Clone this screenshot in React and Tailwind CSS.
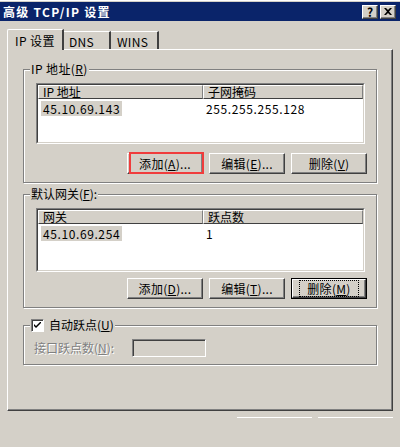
import React from 'react';

const raised = 'border border-t-white border-l-white border-r-[#404040] border-b-[#404040] shadow-[inset_-1px_-1px_0_#808080]';

function U({ children }) {
  return <span className="underline underline-offset-[1px]">{children}</span>;
}

function Btn({ children, isDefault, marked }) {
  return (
    <div className="relative">
      <div
        className={`w-[76px] h-[21px] flex items-center justify-center bg-[#d4d0c8] ${
          isDefault ? 'border border-black' : ''
        }`}
      >
        <div className={`w-full h-full flex items-center justify-center ${raised}`}>
          <div className={`px-[3px] h-[13px] flex items-center leading-[12px] tracking-[0.3px] ${isDefault ? 'outline outline-1 outline-dotted outline-black outline-offset-[1px] px-[6px]' : ''}`}>
            {children}
          </div>
        </div>
      </div>
      {marked && (
        <div className="absolute left-[2px] top-[-1px] right-[-1px] bottom-0 border-2 border-[#f03c3c] pointer-events-none" />
      )}
    </div>
  );
}

function Group({ label, height, className = '', children }) {
  return (
    <div
      className={`relative w-[354px] border border-[#808080] shadow-[1px_1px_0_#fff,inset_1px_1px_0_#fff] ${className}`}
      style={{ height }}
    >
      <div className="absolute left-[6px] top-[-8px] bg-[#d4d0c8] px-[1px] leading-[14px] h-[14px] flex items-center">
        {label}
      </div>
      {children}
    </div>
  );
}

function ListView({ cols, row, height }) {
  return (
    <div
      className="w-[329px] border border-t-[#808080] border-l-[#808080] border-r-white border-b-white"
      style={{ height }}
    >
      <div className="w-full h-full bg-white border border-t-[#404040] border-l-[#404040] border-r-[#d4d0c8] border-b-[#d4d0c8]">
        <div className="flex h-[14px]">
          <div className="w-[165px] h-full bg-[#d4d0c8] border-t border-l border-t-white border-l-white border-r border-b border-r-[#808080] border-b-[#404040] pl-[4px] leading-[12px] flex items-center">
            {cols[0]}
          </div>
          <div className="flex-1 h-full bg-[#d4d0c8] border-t border-l border-t-white border-l-white border-r border-b border-r-[#808080] border-b-[#404040] pl-[4px] leading-[12px] flex items-center">
            {cols[1]}
          </div>
        </div>
        <div className="flex h-[15px] mt-[2px]">
          <div className="w-[165px] pl-[3px]">
            <span className="inline-flex items-center h-[15px] bg-[#d4d0c8] px-[2px] tracking-[0.6px]">{row[0]}</span>
          </div>
          <div className="flex-1 pl-[3px] flex items-center tracking-[0.6px]">{row[1]}</div>
        </div>
      </div>
    </div>
  );
}

export default function App() {
  return (
    <div className="w-[400px] h-[447px] bg-[#d4d0c8] overflow-hidden text-[12px] leading-[12px] text-black font-['Noto_Sans_CJK_SC',sans-serif] select-none">
      {/* Title bar */}
      <div className="border-t border-white pt-[1px]">
        <div className="h-[19px] bg-[#0a246a] flex items-center justify-between pl-[3px] pr-[4px]">
          <span className="text-white font-bold text-[12px] tracking-[1.3px]">高级 TCP/IP 设置</span>
          <div className="flex gap-[2px]">
            <div className={`w-[16px] h-[14px] bg-[#d4d0c8] flex items-center justify-center font-bold text-[12px] leading-[12px] ${raised}`}>?</div>
            <div className={`w-[16px] h-[14px] bg-[#d4d0c8] flex items-center justify-center ${raised}`}>
              <svg width="8" height="7" viewBox="0 0 8 7">
                <path d="M0 0h2l2 2 2-2h2L5 3.5 8 7H6L4 5 2 7H0l3-3.5z" fill="#000" />
              </svg>
            </div>
          </div>
        </div>
      </div>

      {/* Tabs */}
      <div className="flex items-end pl-[7px] mt-[7px] h-[21px] relative z-10">
        <div className="h-[21px] w-[57px] bg-[#d4d0c8] border-t border-l border-t-white border-l-white border-r-2 border-r-[#404040] rounded-tl-[2px] pl-[7px] pt-[5px] mb-[-1px] tracking-[0.4px]">
          IP 设置
        </div>
        <div className="h-[18px] w-[47px] border-t border-t-white border-r-2 border-r-[#404040] pl-[5px] pt-[4px] tracking-[0.3px]">
          DNS
        </div>
        <div className="h-[18px] w-[48px] border-t border-t-white border-r-2 border-r-[#404040] pl-[6px] pt-[4px] tracking-[0.3px]">
          WINS
        </div>
      </div>

      {/* Panel */}
      <div className="ml-[7px] w-[386px] h-[362px] border-t border-l border-t-white border-l-white border-r border-b border-r-[#404040] border-b-[#404040] shadow-[inset_-1px_-1px_0_#808080] pl-[15px] pt-[19px]">
        <Group label={<span className="tracking-[0.4px]">IP 地址(<U>R</U>)</span>} height={114}>
          <div className="pl-[12px] pt-[13px]">
            <ListView cols={['IP 地址', '子网掩码']} row={['45.10.69.143', '255.255.255.128']} height={61} />
            <div className="flex gap-[6px] mt-[9px] pl-[91px]">
              <Btn marked>添加(<U>A</U>)...</Btn>
              <Btn>编辑(<U>E</U>)...</Btn>
              <Btn>删除(<U>V</U>)</Btn>
            </div>
          </div>
        </Group>

        <Group label={<span>默认网关(<U>F</U>):</span>} height={114} className="mt-[11px]">
          <div className="pl-[12px] pt-[13px]">
            <ListView cols={['网关', '跃点数']} row={['45.10.69.254', '1']} height={64} />
            <div className="flex gap-[6px] mt-[6px] pl-[91px]">
              <Btn>添加(<U>D</U>)...</Btn>
              <Btn>编辑(<U>T</U>)...</Btn>
              <Btn isDefault>删除(<U>M</U>)</Btn>
            </div>
          </div>
        </Group>

        <Group
          label={
            <span className="flex items-center gap-[5px]">
              <span className="w-[13px] h-[13px] bg-white border border-t-[#808080] border-l-[#808080] border-r-white border-b-white flex items-center justify-center shadow-[inset_1px_1px_0_#404040]">
                <svg width="7" height="7" viewBox="0 0 7 7">
                  <path d="M0 2v2l2 2 5-5V-1L2 4z" fill="#000" />
                </svg>
              </span>
              <span>自动跃点(<U>U</U>)</span>
            </span>
          }
          height={40}
          className="mt-[17px]"
        >
          <div className="flex items-center pl-[10px] pt-[13px] gap-[10px]">
            <span className="text-[#808080] [text-shadow:1px_1px_0_#fff] w-[88px]">接口跃点数(<U>N</U>):</span>
            <div className="w-[74px] h-[18px] border border-t-[#808080] border-l-[#808080] border-r-white border-b-white shadow-[inset_1px_1px_0_#404040]" />
          </div>
        </Group>
      </div>

      {/* Footer buttons (cut off) */}
      <div className="flex gap-[6px] pl-[237px] mt-[6px]">
        <div className="w-[75px] h-[30px] border-t border-white" />
        <div className="w-[75px] h-[30px] border-t border-white" />
      </div>
    </div>
  );
}
